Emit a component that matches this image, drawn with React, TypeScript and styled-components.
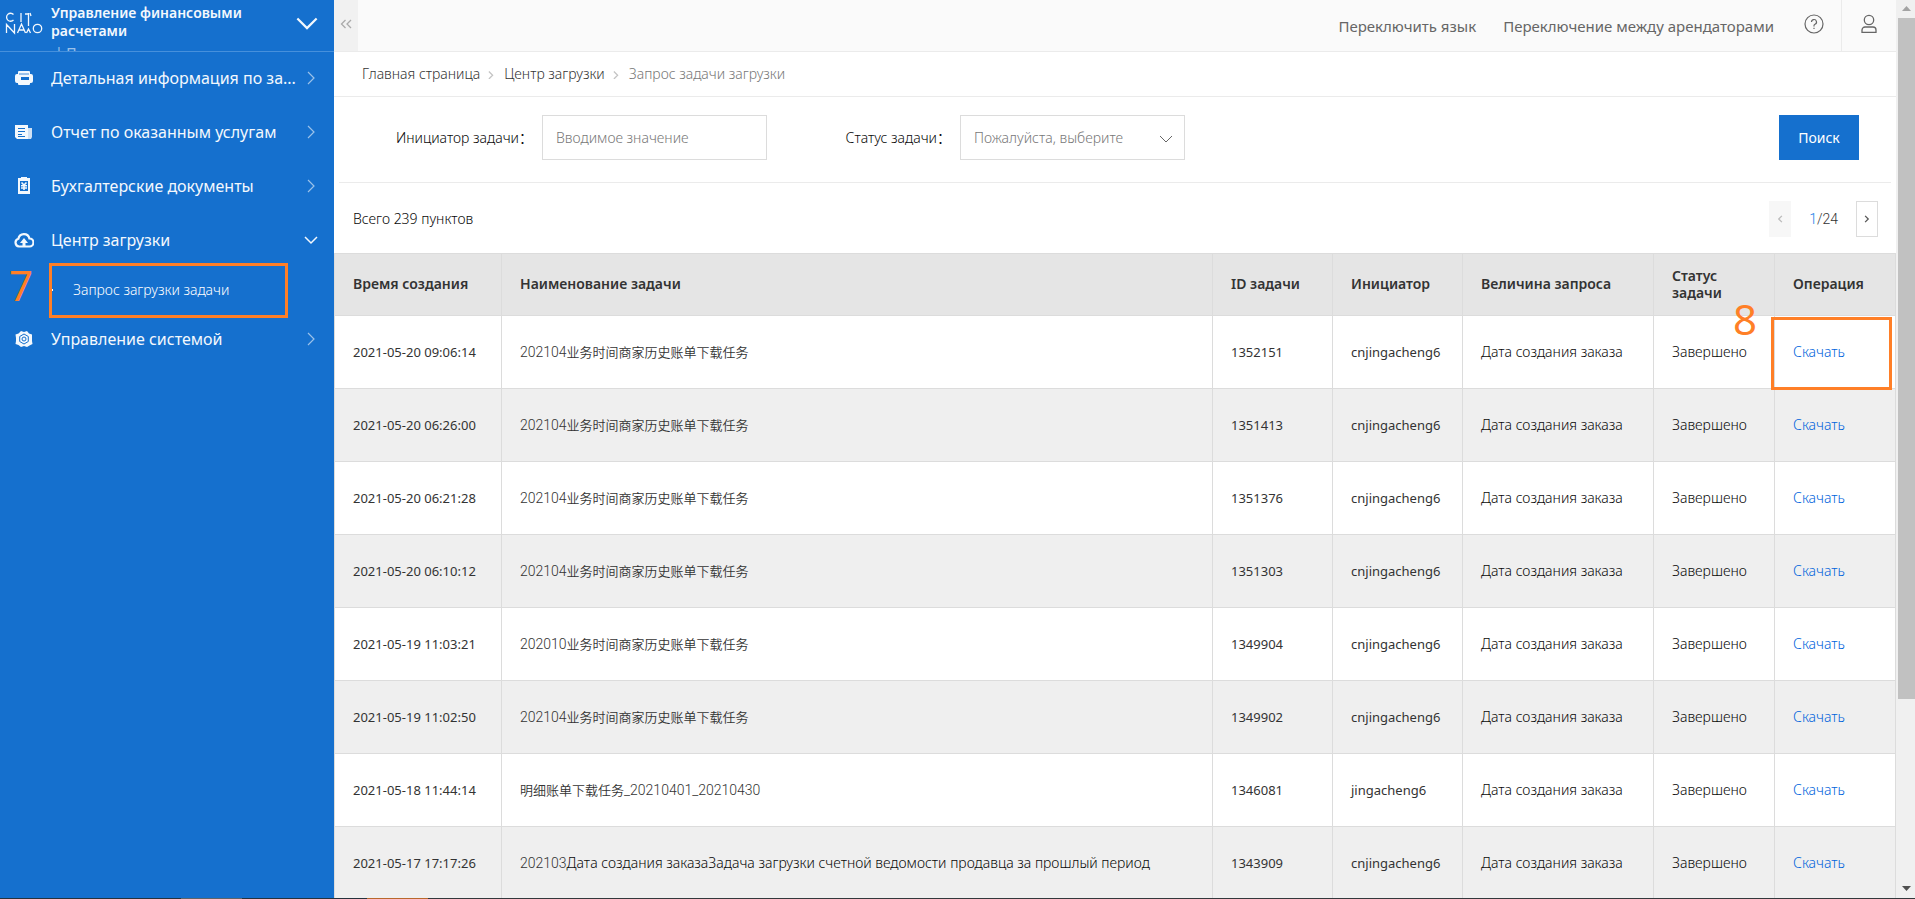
import React from "react";
import styled, { createGlobalStyle, css } from "styled-components";

const BLUE = "#1570ce";
const LINE = "#dcdcdc";
const MARK = "#ff7f27";

const GlobalStyle = createGlobalStyle`
  *, *::before, *::after { box-sizing: border-box; }
  body {
    margin: 0;
    background: #fff;
    color: #080808;
    font: 350 14px/18px "Noto Sans", "Noto Sans CJK SC", sans-serif;
  }
  button, input, select { font: inherit; color: inherit; margin: 0; border-radius: 0; }
  button { cursor: pointer; }
  a { color: inherit; text-decoration: none; }
  ul, ol { list-style: none; margin: 0; padding: 0; }
`;

const Page = styled.div`
  display: flex;
  flex-direction: column;
  height: 100vh;
  overflow: hidden;
`;

const Body = styled.div`
  display: flex;
  flex: 1;
  min-height: 0;
`;

const TaskbarEdge = styled.div`
  flex: none;
  height: 1px;
  background: linear-gradient(
    90deg,
    #26323c 181px, #5f6468 181px 242px, #26323c 242px 367px,
    #b8682c 367px 428px, #33383c 428px
  );
`;

/* Sidebar */

const Sidebar = styled.aside`
  flex: none;
  width: 334px;
  background: ${BLUE};
  color: #f3f8fd;
`;

const Brand = styled.div`
  display: flex;
  height: 52px;
  overflow: hidden;
  padding: 4px 16px 0 4px;
  border-bottom: 1px solid #4690dc;
`;

const BrandLogo = styled.svg`
  flex: none;
  width: 40px;
  height: 24px;
  margin: 7px 7px 0 0;
`;

const BrandText = styled.div`
  flex: 1;
  font-weight: 600;
`;

const BrandNote = styled.div`
  padding: 4px 0 0 4px;
  font-weight: 400;
  opacity: 0.6;
`;

const BrandToggle = styled.button`
  display: flex;
  align-items: center;
  height: 40px;
  padding: 0;
  border: 0;
  background: none;
`;

const NavRow = styled.a`
  display: flex;
  align-items: center;
  height: 54px;
  padding: 0 15px 2px 14px;
  font-weight: 400;
  font-size: 16px;
  line-height: 22px;
`;

const NavIcon = styled.svg`
  flex: none;
  width: 20px;
  height: 20px;
  margin-right: 17px;
`;

const NavLabel = styled.span`
  flex: 1;
  overflow: hidden;
  white-space: nowrap;
  text-overflow: ellipsis;
`;

const NavArrow = styled.svg<{ $open?: boolean }>`
  flex: none;
  width: 16px;
  height: 16px;
  opacity: ${(p) => (p.$open ? 1 : 0.6)};
`;

const SubItem = styled.li`
  position: relative;
  display: flex;
  align-items: center;
  height: 45px;
  padding: 0 0 2px 51px;
  color: #fff;
`;

const SubLink = styled.a`
  display: flex;
  align-items: center;
  gap: 20px;

  &::before {
    content: "";
    width: 2px;
    height: 2px;
    background: #fff;
  }
`;

/* Numbered call-outs that lie over the page */

const Frame = styled.span<{ $place: "menu" | "cell" }>`
  position: absolute;
  z-index: 1;
  border: 3px solid ${MARK};
  pointer-events: none;
  ${(p) =>
    p.$place === "menu"
      ? css`inset: -5px 46px -5px 49px;`
      : css`inset: 1px 3px -2px -4px;`}
`;

const Step = styled.span<{ $place: "menu" | "cell" }>`
  position: absolute;
  z-index: 1;
  color: ${MARK};
  font-weight: 400;
  font-size: 42px;
  line-height: 42px;
  ${(p) =>
    p.$place === "menu" ? css`left: 9px; top: -4px;` : css`left: -42px; top: -18px;`}
`;

/* Top bar */

const Main = styled.main`
  flex: 1;
  min-width: 0;
  overflow: hidden;
`;

const TopBar = styled.header`
  display: flex;
  height: 52px;
  border-bottom: 1px solid #ebebeb;
  background: #fafafa;
  color: #666;
`;

const Collapse = styled.button`
  display: flex;
  align-items: center;
  justify-content: center;
  width: 24px;
  padding: 0 1px 4px 0;
  border: 0;
  background: #f1f1f1;
`;

const TopLinks = styled.nav`
  display: flex;
  gap: 27px;
  margin: 0 12px 0 auto;
  font-weight: 400;
  font-size: 15px;
  line-height: 53px;
`;

const TopIcon = styled.button<{ $divided?: boolean }>`
  display: flex;
  align-items: center;
  justify-content: center;
  width: 55px;
  padding: 0 0 3px;
  border: 0;
  border-left: ${(p) => (p.$divided ? "1px solid #ebebeb" : "0")};
  background: none;
`;

/* Content */

const Crumbs = styled.ol`
  display: flex;
  align-items: center;
  gap: 7px;
  height: 45px;
  padding-left: 28px;
  border-bottom: 1px solid #ebebeb;
  color: #333;
`;

const Crumb = styled.li<{ $current?: boolean }>`
  display: flex;
  align-items: center;
  gap: 7px;
  color: ${(p) => (p.$current ? "#777" : "inherit")};

  svg { color: #c4c4c4; }
`;

const Filters = styled.form`
  display: flex;
  height: 86px;
  margin: 0 5px;
  padding: 18px 32px 22px 10px;
  border-bottom: 1px solid #ebebeb;
`;

const Field = styled.div`
  position: relative;
  display: flex;
  align-items: center;
  width: 418px;
`;

const FieldLabel = styled.label`
  flex: 1;
  padding-right: 9px;
  text-align: right;
`;

const control = css`
  width: 225px;
  height: 45px;
  padding: 0 13px;
  border: 1px solid ${LINE};
  background: #fff;
`;

const TextInput = styled.input`
  ${control}
  &::placeholder { color: #777; opacity: 1; }
`;

const Select = styled.select`
  ${control}
  appearance: none;
  color: #777;
`;

const SelectArrow = styled.svg`
  position: absolute;
  right: 11px;
  top: 16px;
  pointer-events: none;
`;

const SearchButton = styled.button`
  width: 80px;
  height: 45px;
  margin-left: auto;
  border: 0;
  background: ${BLUE};
  color: #fff;
  font-weight: 400;
`;

const Summary = styled.div`
  display: flex;
  align-items: center;
  justify-content: space-between;
  height: 70px;
  padding: 2px 18px 0 19px;
`;

const Pager = styled.nav`
  display: flex;
  align-items: center;
  gap: 18px;
  color: #333;
  font-family: Roboto, sans-serif;
`;

const PageButton = styled.button`
  display: flex;
  align-items: center;
  justify-content: center;
  width: 22px;
  height: 36px;
  padding: 0;
  border: 1px solid ${LINE};
  background: #fff;
  color: #555;

  &:disabled {
    border-color: #f7f7f7;
    background: #f7f7f7;
    color: #bbb;
  }
`;

const PageNow = styled.span`
  color: #1b7fe8;
`;

const TaskTable = styled.table`
  width: 100%;
  table-layout: fixed;
  border-collapse: collapse;
`;

const Col = styled.col<{ $w?: number }>`
  width: ${(p) => (p.$w ? `${p.$w}px` : "auto")};
`;

const Th = styled.th`
  height: 62px;
  padding: 0 17px 2px 18px;
  border: 1px solid ${LINE};
  background: #e5e5e5;
  color: #333;
  font-weight: 600;
  line-height: 17px;
  text-align: left;
`;

const Tr = styled.tr`
  &:nth-child(even) { background: #efefef; }
`;

const Td = styled.td<{ $latin?: boolean }>`
  position: relative;
  height: 73px;
  padding: 0 17px 0 18px;
  border: 1px solid ${LINE};
  white-space: nowrap;
  ${(p) =>
    p.$latin &&
    css`
      color: #333;
      font-weight: 400;
      font-size: 13px;
    `}
`;

const Digits = styled.span`
  color: #333;
  font-family: Roboto, sans-serif;
`;

const Hanzi = styled.span`
  color: #333;
  font-family: "Noto Sans CJK SC", sans-serif;
  font-size: 13px;
`;

const Download = styled.a`
  color: #0064dc;
`;

/* Window scroll bar */

const Scroll = styled.div`
  display: flex;
  flex: none;
  flex-direction: column;
  align-items: center;
  width: 19px;
  padding-left: 2px;
  background: #f0f0f0;
`;

const ScrollArrow = styled.svg`
  flex: none;
  width: 17px;
  height: 18px;
`;

const ScrollTrack = styled.div`
  flex: 1;
  width: 100%;
`;

const ScrollThumb = styled.div`
  height: 79%;
  background: #c1c1c1;
`;

const Chevron = ({ d, w = 1, size = 16 }: { d: string; w?: number; size?: number }) => (
  <svg width={size} height={size} viewBox="0 0 16 16" fill="none" stroke="currentColor" strokeWidth={w} aria-hidden>
    <path d={d} />
  </svg>
);

const icons: Record<string, React.ReactNode> = {
  detail: (
    <>
      <path d="M5 3h10a1 1 0 0 1 1 1v2h1a2 2 0 0 1 2 2v5a2 2 0 0 1-2 2h-1v1a1 1 0 0 1-1 1H5a1 1 0 0 1-1-1v-1H3a2 2 0 0 1-2-2V8a2 2 0 0 1 2-2h1V4a1 1 0 0 1 1-1z" fill="#f3f8fd" />
      <path d="M7 9h8v3H7z" fill={BLUE} />
      <path d="M5 6h10" stroke={BLUE} strokeWidth="0.8" />
    </>
  ),
  report: (
    <>
      <path d="M1 3h13v14H3l-2-2z" fill="#f3f8fd" />
      <path d="M14 6h4v9l-1 2h-3z" fill="#cfe1f5" />
      <path d="M4 6.500h7M4 9.500h7M4 12.500h4M4 14.500h7" stroke={BLUE} strokeWidth="1" />
    </>
  ),
  docs: (
    <>
      <path d="M4 2h12v16H4z" fill="#f3f8fd" />
      <path d="M6 5h8v10H6z" fill={BLUE} />
      <path d="M7 1h6v3H7z" fill="#f3f8fd" />
      <path d="M7.500 6.500l2.500 2.500 2.500-2.500M10 8v6M7 9.800h6M7 12h6" stroke="#f3f8fd" strokeWidth="1.600" fill="none" />
    </>
  ),
  cloud: (
    <>
      <path
        d="M6 16.500H5A4 4 0 0 1 4.400 8.700A5.600 5.600 0 0 1 15.400 8.500 4 4 0 0 1 15.500 16.500H14"
        stroke="#f3f8fd" strokeWidth="2.200" fill="none"
      />
      <path d="M10 8l4 5h-2.500v2.500h2.500v2H6v-2h2.500V13H6z" fill="#f3f8fd" />
    </>
  ),
  system: (
    <>
      <path d="M7 2l3 1 3-1 2 2.500 3 1L18 9v3l.500 3-3 1.500L13 18l-3-1-3 1-2.500-2-3-1L2 12V9l-.500-3.500 3-1z" fill="#f3f8fd" />
      <path d="M10 5l4.300 2.500v5L10 15l-4.300-2.500v-5z" fill="none" stroke={BLUE} strokeWidth="1" />
      <circle cx="10" cy="10" r="2" fill="none" stroke={BLUE} strokeWidth="1" />
    </>
  ),
};

const RIGHT = "M5 2l6 6-6 6";
const DOWN = "M2 5l6 6 6-6";

const NavItem = ({ icon, label, open }: { icon: string; label: string; open?: boolean }) => (
  <NavRow href="#">
    <NavIcon viewBox="0 0 20 20" aria-hidden>{icons[icon]}</NavIcon>
    <NavLabel>{label}</NavLabel>
    <NavArrow $open={open} viewBox="0 0 16 16" fill="none" stroke="currentColor" strokeWidth={open ? 1.5 : 1.2}>
      <path d={open ? DOWN : RIGHT} />
    </NavArrow>
  </NavRow>
);

type Task = { time: string; digits: string; text?: string; hanzi?: string; tail?: string; id: string; by: string };

const HISTORY = "业务时间商家历史账单下载任务";

const tasks: Task[] = [
  { time: "2021-05-20 09:06:14", digits: "202104", hanzi: HISTORY, id: "1352151", by: "cnjingacheng6" },
  { time: "2021-05-20 06:26:00", digits: "202104", hanzi: HISTORY, id: "1351413", by: "cnjingacheng6" },
  { time: "2021-05-20 06:21:28", digits: "202104", hanzi: HISTORY, id: "1351376", by: "cnjingacheng6" },
  { time: "2021-05-20 06:10:12", digits: "202104", hanzi: HISTORY, id: "1351303", by: "cnjingacheng6" },
  { time: "2021-05-19 11:03:21", digits: "202010", hanzi: HISTORY, id: "1349904", by: "cnjingacheng6" },
  { time: "2021-05-19 11:02:50", digits: "202104", hanzi: HISTORY, id: "1349902", by: "cnjingacheng6" },
  { time: "2021-05-18 11:44:14", digits: "", hanzi: "明细账单下载任务", tail: "_20210401_20210430", id: "1346081", by: "jingacheng6" },
  {
    time: "2021-05-17 17:17:26",
    digits: "202103",
    text: "Дата создания заказаЗадача загрузки счетной ведомости продавца за прошлый период",
    id: "1343909",
    by: "cnjingacheng6",
  },
];

const columns: { title: string; w?: number }[] = [
  { title: "Время создания", w: 167 },
  { title: "Наименование задачи" },
  { title: "ID задачи", w: 120 },
  { title: "Инициатор", w: 130 },
  { title: "Величина запроса", w: 191 },
  { title: "Статус задачи", w: 121 },
  { title: "Операция", w: 121 },
];

export default function App() {
  return (
    <Page>
      <GlobalStyle />
      <Body>
        <Sidebar>
          <Brand>
            <BrandLogo viewBox="0 0 40 24" fill="none" stroke="#f3f8fd" strokeWidth="1.3" aria-label="CAINIAO">
              <path d="M9.500 3.500A4 4 0 1 0 9.500 9M17 2v9M21 3h3M26 2l1 3M24.500 2v13M2.500 22v-8.500l8 8.500v-9M13.500 22l4-9 4 9M15 19h5M22.500 22l2-4 2 4" />
              <circle cx="33.500" cy="17.500" r="4.200" />
            </BrandLogo>
            <BrandText>
              Управление финансовыми<br />расчетами
              <BrandNote>| П</BrandNote>
            </BrandText>
            <BrandToggle aria-label="Выбрать раздел">
              <Chevron d="M1 4l7 7 7-7" w={1.6} size={22} />
            </BrandToggle>
          </Brand>
          <nav>
            <NavItem icon="detail" label="Детальная информация по за..." />
            <NavItem icon="report" label="Отчет по оказанным услугам" />
            <NavItem icon="docs" label="Бухгалтерские документы" />
            <NavItem icon="cloud" label="Центр загрузки" open />
            <ul>
              <SubItem>
                <SubLink href="#">Запрос загрузки задачи</SubLink>
                <Frame $place="menu" />
                <Step $place="menu">7</Step>
              </SubItem>
            </ul>
            <NavItem icon="system" label="Управление системой" />
          </nav>
        </Sidebar>

        <Main>
          <TopBar>
            <Collapse aria-label="Свернуть меню">
              <svg width="14" height="12" viewBox="0 0 14 12" fill="none" stroke="#aaa" strokeWidth="1.3">
                <path d="M6.500 2l-4 4 4 4M12 2L8 6l4 4" />
              </svg>
            </Collapse>
            <TopLinks>
              <a href="#">Переключить язык</a>
              <a href="#">Переключение между арендаторами</a>
            </TopLinks>
            <TopIcon aria-label="Справка">
              <svg width="20" height="20" viewBox="0 0 20 20" fill="none" stroke="#666" strokeWidth="1.2">
                <circle cx="10" cy="10" r="9" />
                <path d="M7.500 8a2.500 2.500 0 1 1 3.500 2.300c-.7.300-1 .7-1 1.400v.8M10 13.800v1.200" />
              </svg>
            </TopIcon>
            <TopIcon $divided aria-label="Профиль">
              <svg width="18" height="20" viewBox="0 0 18 20" fill="none" stroke="#666" strokeWidth="1.300">
                <circle cx="9" cy="6" r="4.700" />
                <path d="M2 18.300v-2.300a3 3 0 0 1 3-3h8a3 3 0 0 1 3 3v2.300z" />
              </svg>
            </TopIcon>
          </TopBar>

          <Crumbs>
            <Crumb><a href="#">Главная страница</a></Crumb>
            <Crumb><Chevron d="M3 4l6 6-6 6" w={2} size={10} /><a href="#">Центр загрузки</a></Crumb>
            <Crumb $current><Chevron d="M3 4l6 6-6 6" w={2} size={10} />Запрос задачи загрузки</Crumb>
          </Crumbs>

          <Filters>
            <Field>
              <FieldLabel htmlFor="initiator">Инициатор задачи：</FieldLabel>
              <TextInput id="initiator" placeholder="Вводимое значение" />
            </Field>
            <Field>
              <FieldLabel htmlFor="status">Статус задачи：</FieldLabel>
              <Select id="status" defaultValue="">
                <option value="">Пожалуйста, выберите</option>
              </Select>
              <SelectArrow width="16" height="16" viewBox="0 0 16 16" fill="none" stroke="#666">
                <path d={DOWN} />
              </SelectArrow>
            </Field>
            <SearchButton type="button">Поиск</SearchButton>
          </Filters>

          <Summary>
            <span>Всего 239 пунктов</span>
            <Pager>
              <PageButton disabled aria-label="Назад"><Chevron d="M11 3L6 8l5 5" w={2} size={10} /></PageButton>
              <span><PageNow>1</PageNow>/24</span>
              <PageButton aria-label="Вперёд"><Chevron d="M5 3l5 5-5 5" w={2} size={10} /></PageButton>
            </Pager>
          </Summary>

          <TaskTable>
            <colgroup>
              {columns.map((c) => <Col key={c.title} $w={c.w} />)}
            </colgroup>
            <thead>
              <tr>{columns.map((c) => <Th key={c.title}>{c.title}</Th>)}</tr>
            </thead>
            <tbody>
              {tasks.map((t, i) => (
                <Tr key={t.id}>
                  <Td $latin>{t.time}</Td>
                  <Td>
                    <Digits>{t.digits}</Digits>
                    {t.hanzi && <Hanzi>{t.hanzi}</Hanzi>}
                    {t.text}
                    {t.tail && <Digits>{t.tail}</Digits>}
                  </Td>
                  <Td $latin>{t.id}</Td>
                  <Td $latin>{t.by}</Td>
                  <Td>Дата создания заказа</Td>
                  <Td>Завершено</Td>
                  <Td>
                    <Download href="#">Скачать</Download>
                    {i === 0 && <Frame $place="cell" />}
                    {i === 0 && <Step $place="cell">8</Step>}
                  </Td>
                </Tr>
              ))}
            </tbody>
          </TaskTable>
        </Main>

        <Scroll aria-hidden>
          <ScrollArrow viewBox="0 0 17 18"><path d="M4 11l4.500-5 4.500 5z" fill="#a3a3a3" /></ScrollArrow>
          <ScrollTrack><ScrollThumb /></ScrollTrack>
          <ScrollArrow viewBox="0 0 17 18"><path d="M4 6h9l-4.500 5z" fill="#505050" /></ScrollArrow>
        </Scroll>
      </Body>
      <TaskbarEdge />
    </Page>
  );
}
